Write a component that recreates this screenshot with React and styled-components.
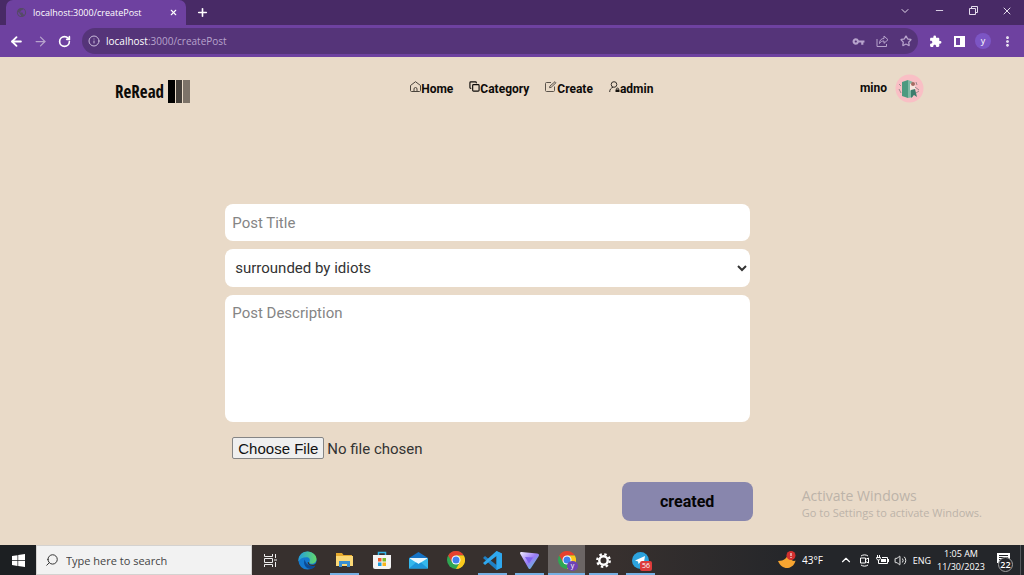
import React, { useState } from 'react'
import styled, { createGlobalStyle, css } from 'styled-components'
import {
  ArrowLeft, ArrowRight, RotateCw, Info, X, Plus, ChevronDown, ChevronUp, Minus,
  Star, EllipsisVertical, Copy, Search, Volume2,
} from 'lucide-react'
import { MdExtension, MdVpnKey, MdPublic } from 'react-icons/md'

const GlobalStyle = createGlobalStyle`
  * { box-sizing: border-box; }
  body { margin: 0; font-family: Roboto, sans-serif; }
  button { border: 0; padding: 0; background: none; color: inherit; font: inherit; cursor: pointer; }
`

const App = () => {
  const [title, setTitle] = useState('')
  const [book, setBook] = useState('surrounded by idiots')
  const [description, setDescription] = useState('')

  return (
    <Screen>
      <GlobalStyle />
      <BrowserBar />
      <Page>
        <Header />
        <Form onSubmit={(e) => e.preventDefault()}>
          <TextInput
            type="text"
            aria-label="Post Title"
            placeholder="Post Title"
            value={title}
            onChange={(e) => setTitle(e.target.value)}
          />
          <Select aria-label="Book" value={book} onChange={(e) => setBook(e.target.value)}>
            <option>surrounded by idiots</option>
          </Select>
          <TextArea
            aria-label="Post Description"
            placeholder="Post Description"
            value={description}
            onChange={(e) => setDescription(e.target.value)}
          />
          <FileInput type="file" aria-label="Post image" />
          <Submit type="submit">created</Submit>
        </Form>
        <Watermark>
          <WatermarkTitle>Activate Windows</WatermarkTitle>
          <WatermarkText>Go to Settings to activate Windows.</WatermarkText>
        </Watermark>
      </Page>
      <Taskbar />
    </Screen>
  )
}

export default App

const BrowserBar = () => (
  <Chrome>
    <TabStrip>
      <Tab>
        <MdPublic size={11} color="#554a66" />
        <TabTitle>localhost:3000/createPost</TabTitle>
        <TabClose aria-label="Close tab"><X size={9} strokeWidth={3} /></TabClose>
      </Tab>
      <NewTab aria-label="New tab"><Plus size={13} strokeWidth={3} /></NewTab>
      <WindowButtons>
        <WindowButton aria-label="Search tabs"><ChevronDown size={12} /></WindowButton>
        <WindowButton aria-label="Minimize"><Minus size={11} /></WindowButton>
        <WindowButton aria-label="Restore">
          <svg width="9" height="9" viewBox="0 0 9 9" fill="none" stroke="currentColor">
            <path d="M.5 2.5h6v6h-6zM2.5 2.5v-2h6v6h-2" />
          </svg>
        </WindowButton>
        <WindowButton aria-label="Close"><X size={12} /></WindowButton>
      </WindowButtons>
    </TabStrip>
    <Toolbar>
      <ToolButton aria-label="Back"><ArrowLeft size={15} strokeWidth={3} /></ToolButton>
      <ToolButton aria-label="Forward" $dim><ArrowRight size={15} strokeWidth={2} /></ToolButton>
      <ToolButton aria-label="Reload"><RotateCw size={13} strokeWidth={3} /></ToolButton>
      <AddressBar>
        <Info size={12} color="#cbbddc" />
        <Address role="textbox" aria-label="Address" contentEditable suppressContentEditableWarning>
          <b>localhost</b>:3000/createPost
        </Address>
        <ToolButton aria-label="Passwords" $dim><MdVpnKey size={13} /></ToolButton>
        <ToolButton aria-label="Share" $dim>
          <svg width="13" height="12" viewBox="0 0 13 12" fill="none" stroke="currentColor">
            <path d="M1 4v7.5h9.500V9M3.500 8.500C3.500 5 5.500 3.500 8 3.500V1l4 3.700-4 3.600V6C6 6 4.500 6.500 3.500 8.500z" />
          </svg>
        </ToolButton>
        <ToolButton aria-label="Bookmark" $dim><Star size={12} strokeWidth={2.500} /></ToolButton>
      </AddressBar>
      <ToolButton aria-label="Extensions"><MdExtension size={13} /></ToolButton>
      <ToolButton aria-label="Side panel">
        <svg width="11" height="11" viewBox="0 0 11 11">
          <path fill="currentColor" fillRule="evenodd" d="M0 0h11v11H0zM2 2v7h4V2z" />
        </svg>
      </ToolButton>
      <ToolButton aria-label="Profile"><Profile>y</Profile></ToolButton>
      <ToolButton aria-label="Menu"><EllipsisVertical size={13} strokeWidth={3} /></ToolButton>
    </Toolbar>
  </Chrome>
)

const Header = () => (
  <HeaderBar>
    <Logo href="#">
      ReRead
      <svg width="22" height="23" viewBox="0 0 22 23">
        <path fill="#000" d="M0 0h7v23H0z" />
        <path fill="#45403b" d="M8 0h6v23H8z" />
        <path fill="#7d7369" d="M15 0h7v23h-7z" />
      </svg>
    </Logo>
    <Nav>
      <NavLink href="#">
        <svg width="11" height="11" viewBox="0 0 11 11" fill="none" stroke="#4a443d">
          <path d="M1.500 10.500c-.6 0-1-.4-1-1V4.500L5.500.7l5 3.800v5c0 .6-.4 1-1 1zM4 10.500V8a1.500 1.500 0 0 1 3 0v2.500" />
        </svg>
        Home
      </NavLink>
      <NavLink href="#"><Copy size={11} strokeWidth={2.500} />Category</NavLink>
      <NavLink href="#">
        <svg width="12" height="11" viewBox="0 0 12 11" fill="none" stroke="#5a534b">
          <path d="M6 1.500H1.500c-.6 0-1 .4-1 1v7c0 .6.4 1 1 1h7c.6 0 1-.4 1-1V5.500M4.500 6.700l.4-1.600L10 .7l1 1-4.800 4.600z" />
        </svg>
        Create
      </NavLink>
      <NavLink href="#">
        <svg width="11" height="12" viewBox="0 0 11 12" fill="none" stroke="#332e29">
          <circle cx="5" cy="3.500" r="2.800" />
          <path d="M.7 11c0-2.500 1.200-4 3.300-4.700M7.500 8.500V8a1 1 0 0 1 2 0v.5" />
          <path fill="#15120f" stroke="none" d="M6.500 8.500h4V11h-4z" />
        </svg>
        admin
      </NavLink>
    </Nav>
    <User href="#">
      mino
      <svg width="29" height="29" viewBox="0 0 29 29">
        <circle cx="14.500" cy="14.500" r="14" fill="#f9bfc5" />
        <path fill="#4c9a80" d="M7 8l6-2v18l-6-2z" />
        <path fill="#7fb8a4" d="M13 6l5 2v15l-5 1z" />
        <path fill="#f7e6df" d="M15 10l4-2 2 6-3 4-3-2z" />
        <path fill="#3d7d6d" d="M16 16l4-1 2 8-3-2-3 3z" />
        <path fill="none" stroke="#9c8a8c" d="M4 10l2 2M4 15l2 4M20 13l4 3M21 8l1 3M21 19l3-2" />
        <circle cx="18" cy="10" r="2" fill="#a56a61" />
      </svg>
    </User>
  </HeaderBar>
)

const Taskbar = () => (
  <Bar>
    <Start aria-label="Start">
      <svg width="13" height="13" viewBox="0 0 13 13" fill="#fff">
        <path d="M0 2l5.500-.8v5H0zM6.200 1.100L13 0v6.200H6.200zM0 6.900h5.500v5L0 11.100zM6.200 6.900H13V13l-6.800-1z" />
      </svg>
    </Start>
    <SearchBox>
      <Search size={14} strokeWidth={1.700} color="#333" style={undefined} />
      <SearchInput type="text" aria-label="Search" placeholder="Type here to search" />
    </SearchBox>
    <TaskButton aria-label="Task view">
      <svg width="13" height="13" viewBox="0 0 13 13" fill="none" stroke="#eee">
        <path d="M.5 0v2.500h8V0M.5 4.500h8v4h-8zM.5 13v-2.500h8V13M11.500 0v4M11.500 8v5M10 6h3" />
      </svg>
    </TaskButton>
    <TaskButton aria-label="Edge">
      <svg width="19" height="19" viewBox="0 0 20 20">
        <defs>
          <linearGradient id="edgeTop" x1="0" x2="1"><stop stopColor="#239ddd" /><stop offset="1" stopColor="#62d96b" /></linearGradient>
        </defs>
        <circle cx="10" cy="10" r="9.500" fill="#1479cf" />
        <path fill="url(#edgeTop)" d="M.5 9C1 4 5 .5 10 .5c5.500 0 9.500 4 9.500 8 0 3-2.500 5-5 5-2 0-3-1-2.500-2 1.500-3-.5-5-3-5C5 6.500 2 8 .5 11z" />
        <path fill="#0c4a94" d="M7 9c-2 5 1 10 7 10 2-.5 4-2 4.500-4-5 2-10 0-11.500-6z" />
        <path fill="#37302e" d="M11.800 11.500c-.8 1.500.7 3 3 3 2 0 3.700-1 4.700-2.500l.5 2-2 1.500c-4 1-7.500-.5-8-3.500z" />
      </svg>
    </TaskButton>
    <TaskButton aria-label="File Explorer" $open>
      <svg width="17" height="16" viewBox="0 0 17 16">
        <path fill="#e6a92d" d="M0 1h6l1.500 2H16v4H0z" />
        <path fill="#fbd876" d="M0 4h17v10H0z" />
        <path fill="#3a8fd0" d="M3 9h11v6h-3v-3H6v3H3z" />
      </svg>
    </TaskButton>
    <TaskButton aria-label="Store">
      <svg width="18" height="19" viewBox="0 0 18 19">
        <path fill="none" stroke="#32b4e8" strokeWidth="1.500" d="M5.500 5V1.500h7V5" />
        <path fill="#f4f4f4" d="M0 4h18v12a2 2 0 0 1-2 2H2a2 2 0 0 1-2-2z" />
        <path fill="#ee5a2b" d="M5 7h3.500v3.500H5z" />
        <path fill="#7db928" d="M9.500 7H13v3.500H9.500z" />
        <path fill="#1c9fe0" d="M5 11.500h3.500V15H5z" />
        <path fill="#f7b51b" d="M9.500 11.500H13V15H9.500z" />
      </svg>
    </TaskButton>
    <TaskButton aria-label="Mail">
      <svg width="19" height="17" viewBox="0 0 19 17">
        <path fill="#1673c4" d="M0 6l9.500-6L19 6v10H0z" />
        <path fill="#e9f7fd" d="M1 6h17v9H1z" />
        <path fill="#34b8ec" d="M0 6l9.500 6L19 6v10.500H0z" />
        <path fill="#1e96da" d="M0 16.500l7-6 2.500 1.500 2.500-1.500 7 6z" />
      </svg>
    </TaskButton>
    <TaskButton aria-label="Chrome"><ChromeLogo /></TaskButton>
    <TaskButton aria-label="Visual Studio Code" $open>
      <svg width="19" height="19" viewBox="0 0 19 19">
        <path fill="#1f80c6" d="M13.500 0L19 2.500v14L13.500 19 0 7l2-2 11.500 9z" />
        <path fill="#2fa8ef" d="M13.500 0L19 2.500v14L13.500 19V5L2 14l-2-2z" />
      </svg>
    </TaskButton>
    <TaskButton aria-label="VPN" $open>
      <svg width="19" height="17" viewBox="0 0 19 17">
        <defs>
          <linearGradient id="vpn" x1="0" y1="0" x2="1" y2="1"><stop stopColor="#f0eeff" /><stop offset=".5" stopColor="#9b7cf7" /><stop offset="1" stopColor="#47d7c5" /></linearGradient>
        </defs>
        <path fill="url(#vpn)" d="M1.500 0L17 1.500c2 .2 2.500 1.500 1.500 3L11 16c-1 1.500-2 1.200-2.700 0L.3 2C-.3.800.2 0 1.500 0z" />
        <path fill="#7d63ee" d="M5 5l8 .5-4 6z" />
      </svg>
    </TaskButton>
    <TaskButton aria-label="Chrome, profile y" $open $active>
      <ChromeLogo />
      <Badge $round>y</Badge>
    </TaskButton>
    <TaskButton aria-label="Settings" $open>
      <svg width="15" height="15" viewBox="0 0 16 16" fill="none" stroke="#fff">
        <circle cx="8" cy="8" r="4.500" strokeWidth="2.600" />
        <circle cx="8" cy="8" r="6.700" strokeWidth="2.400" strokeDasharray="2.630 2.630" />
      </svg>
    </TaskButton>
    <TaskButton aria-label="Telegram" $open>
      <svg width="17" height="17" viewBox="0 0 17 17">
        <circle cx="8.500" cy="8.500" r="8.500" fill="#2ca3de" />
        <path fill="#fff" d="M3 8.500L13 4l-1.500 9-3.500-2.500L6.500 12 6 9.500z" />
      </svg>
      <Badge>56</Badge>
    </TaskButton>
    <Tray>
      <Weather>
        <svg width="18" height="18" viewBox="0 0 18 18">
          <path fill="#f7a531" d="M10 1c0 6-4 9-10 9 2 5 6 7.500 10 7s7-4 7.500-7.500C15 11 10 8 10 1z" />
          <circle cx="13" cy="4.500" r="4.500" fill="#d3302f" />
          <path stroke="#fff" d="M13 2v3M13 6v1" />
        </svg>
        43°F
      </Weather>
      <TrayButton aria-label="Show hidden icons"><ChevronUp size={14} /></TrayButton>
      <TrayButton aria-label="Meet now">
        <svg width="11" height="13" viewBox="0 0 11 13" fill="none" stroke="currentColor">
          <path d="M1.500 4h5v5h-5zM6.500 5.500l3-1.500v5l-3-1.500M2 2c2-1.500 5-1.500 7 0M2 11c2 1.500 5 1.500 7 0" />
        </svg>
      </TrayButton>
      <TrayButton aria-label="Battery">
        <svg width="13" height="10" viewBox="0 0 13 10">
          <path fill="currentColor" d="M5 4h5v3H5z" />
          <path fill="none" stroke="currentColor" d="M4 8.500h7.500v-6H6M12.500 4v3M1.500 0v2M3.500 0v2M.5 2.500h4c0 2-1 2.500-2 2.500S.5 4.500.5 2.500zM2.500 5v3.500h2" />
        </svg>
      </TrayButton>
      <TrayButton aria-label="Volume"><Volume2 size={13} strokeWidth={1.700} /></TrayButton>
      <Language>ENG</Language>
      <Clock>
        <span>1:05 AM</span>
        <span>11/30/2023</span>
      </Clock>
      <Notifications aria-label="Notifications">
        <svg width="13" height="14" viewBox="0 0 13 14">
          <path fill="#fff" d="M0 0h13v10H6l-3 3v-3H0z" />
          <path stroke="#24262a" d="M2 2.500h9M2 4.500h9M2 6.500h6" />
        </svg>
        <Count>22</Count>
      </Notifications>
    </Tray>
  </Bar>
)

const ChromeLogo = () => (
  <svg width="18" height="18" viewBox="0 0 18 18">
    <circle cx="9" cy="9" r="9" fill="#2fa653" />
    <path fill="#e5412f" d="M1.200 4.500a9 9 0 0 1 15.600 0H9L5.100 11.200z" />
    <path fill="#fbc91c" d="M16.800 4.500A9 9 0 0 1 9 18l3.900-6.800L9 4.500z" />
    <circle cx="9" cy="9" r="4.500" fill="#fff" />
    <circle cx="9" cy="9" r="3.500" fill="#3f7fee" />
  </svg>
)

const Screen = styled.div`
  display: flex;
  flex-direction: column;
  min-height: 100vh;
`

/* browser */
const Chrome = styled.div`
  font-family: 'Open Sans', sans-serif;
  color: #fff;
  background: #6e41a0;
`

const TabStrip = styled.div`
  display: flex;
  height: 25px;
  padding-left: 6px;
  background: #482a66;
`

const Tab = styled.div`
  display: flex;
  align-items: center;
  gap: 6px;
  width: 180px;
  padding: 0 8px 0 10px;
  border-radius: 7px 7px 0 0;
  background: #6e41a0;
`

const TabTitle = styled.span`
  flex: 1;
  font-size: 9px;
  white-space: nowrap;
`

const TabClose = styled.button`
  display: flex;
`

const NewTab = styled.button`
  display: flex;
  align-items: center;
  justify-content: center;
  width: 32px;
`

const WindowButtons = styled.div`
  display: flex;
  margin-left: auto;
`

const WindowButton = styled.button`
  display: flex;
  align-items: center;
  justify-content: center;
  width: 34px;
  height: 21px;
  color: #e4dcec;
`

const Toolbar = styled.div`
  display: flex;
  align-items: center;
  height: 32px;
  padding: 0 5px 0 4px;
`

const ToolButton = styled.button`
  display: flex;
  align-items: center;
  justify-content: center;
  width: 24px;
  height: 24px;
  color: ${props => (props.$dim ? '#b7a3cc' : '#fff')};
`

const AddressBar = styled.div`
  display: flex;
  align-items: center;
  flex: 1;
  height: 26px;
  margin: 0 5px 0 6px;
  padding-left: 6px;
  border-radius: 13px;
  background: #553479;
`

const Address = styled.div`
  flex: 1;
  padding-left: 6px;
  font-size: 10px;
  color: #b7a3cc;

  b {
    font-weight: 400;
    color: #fff;
  }
`

const Profile = styled.span`
  width: 16px;
  height: 16px;
  border-radius: 50%;
  background: #7c55c4;
  font-size: 9px;
  line-height: 15px;
`

/* page */
const Page = styled.main`
  position: relative;
  flex: 1;
  background: #e9dac8;
`

const HeaderBar = styled.header`
  display: grid;
  grid-template-columns: 12fr auto 11fr;
  align-items: center;
  height: 62px;
  padding: 0 100px 0 115px;
`

const Logo = styled.a`
  display: flex;
  align-items: center;
  gap: 4px;
  padding-top: 6px;
  color: #0d0b09;
  font: 700 17px 'Open Sans Condensed', 'Liberation Sans Narrow', sans-serif;
  text-decoration: none;
`

const Nav = styled.nav`
  display: flex;
  gap: 16px;
  padding-top: 2px;
`

const NavLink = styled.a`
  display: flex;
  color: #0d0b09;
  font: 700 12px/16px Roboto, sans-serif;
  text-decoration: none;
`

const User = styled(NavLink)`
  align-items: center;
  justify-self: end;
  gap: 8px;
`

const Form = styled.form`
  display: flex;
  flex-direction: column;
  width: 52%;
  margin: 85px 0 24px 22%;
  padding-right: 8px;
`

const field = css`
  width: 100%;
  margin-bottom: 8px;
  padding: 8px 7px;
  border: 0;
  border-radius: 8px;
  background: #fff;
  color: #333;
  font: 15px/20px Roboto, sans-serif;

  &::placeholder {
    color: #858585;
  }
`

const TextInput = styled.input`
  ${field}
  height: 37px;
`

const Select = styled.select`
  ${field}
  height: 38px;
  padding: 8px 0 8px 6px;
`

const TextArea = styled.textarea`
  ${field}
  height: 127px;
  resize: none;
`

const FileInput = styled.input`
  margin: 7px 7px 22px;
  color: #333;
  font: 15px/22px Roboto, sans-serif;

  &::file-selector-button {
    height: 22px;
    margin-right: 3px;
    padding: 0 5px;
    border: 1px solid #858585;
    border-radius: 2px;
    background: #efefef;
    color: #111;
    font: 15px 'Liberation Sans', sans-serif;
  }
`

const Submit = styled.button`
  align-self: flex-end;
  width: 25%;
  height: 39px;
  margin-right: -3px;
  border-radius: 8px;
  background: #8886ad;
  color: #050505;
  font: 700 16px Roboto, sans-serif;
`

const Watermark = styled.aside`
  position: absolute;
  right: 42px;
  bottom: 24px;
  color: #bcb3a9;
  font-family: 'Open Sans', sans-serif;
`

const WatermarkTitle = styled.div`
  font-size: 14px;
  line-height: 18px;
`

const WatermarkText = styled.div`
  font-size: 11px;
  line-height: 16px;
`

/* taskbar */
const Bar = styled.footer`
  display: flex;
  height: 30px;
  background: linear-gradient(90deg, #37302e 60%, #24262a 78%);
  color: #fff;
  font-family: 'Open Sans', sans-serif;
`

const Start = styled.button`
  display: flex;
  align-items: center;
  justify-content: center;
  width: 36px;
  background: #1c1f22;
`

const SearchBox = styled.div`
  display: flex;
  align-items: center;
  gap: 5px;
  width: 216px;
  padding: 0 8px;
  border: 1px solid #d4d2d0;
  background: #f2f2f2;

  svg {
    transform: scaleX(-1);
  }
`

const SearchInput = styled.input`
  flex: 1;
  min-width: 0;
  border: 0;
  background: none;
  font: 11px 'Open Sans', sans-serif;

  &::placeholder {
    color: #444;
  }
`

const TaskButton = styled.button`
  position: relative;
  display: flex;
  align-items: center;
  justify-content: center;
  width: 37px;
  background: ${props => (props.$active ? '#6b6564' : 'none')};

  ${props => props.$open && css`
    &::after {
      content: '';
      position: absolute;
      right: ${props.$active ? 0 : 4}px;
      bottom: 0;
      left: ${props.$active ? 0 : 4}px;
      height: 2px;
      background: #76b0e3;
    }
  `}
`

const Badge = styled.span`
  position: absolute;
  right: 7px;
  bottom: 4px;
  min-width: 11px;
  padding: 0 2px;
  border-radius: ${props => (props.$round ? '50%' : '2px')};
  background: ${props => (props.$round ? '#6f42b5' : '#dc3b3b')};
  font-size: 7px;
  line-height: 10px;
`

const Tray = styled.div`
  display: flex;
  align-items: center;
  margin-left: auto;
  padding-right: 3px;
  font-size: 10px;
`

const Weather = styled.button`
  display: flex;
  align-items: center;
  gap: 6px;
  margin-right: 14px;
`

const TrayButton = styled.button`
  display: flex;
  align-items: center;
  justify-content: center;
  width: 18px;
`

const Language = styled.span`
  width: 26px;
  font-size: 9px;
  text-align: center;
`

const Clock = styled.div`
  display: flex;
  flex-direction: column;
  width: 52px;
  font-size: 9px;
  line-height: 13px;
  text-align: center;
`

const Notifications = styled.button`
  position: relative;
  display: flex;
  align-items: center;
  justify-content: center;
  width: 34px;
  height: 30px;
  border-right: 1px solid #55575b;
`

const Count = styled.span`
  position: absolute;
  right: 7px;
  bottom: 3px;
  width: 15px;
  height: 15px;
  border: 1px solid #a0a0a0;
  border-radius: 50%;
  background: #24262a;
  font-size: 9px;
  font-weight: 600;
  line-height: 13px;
`
